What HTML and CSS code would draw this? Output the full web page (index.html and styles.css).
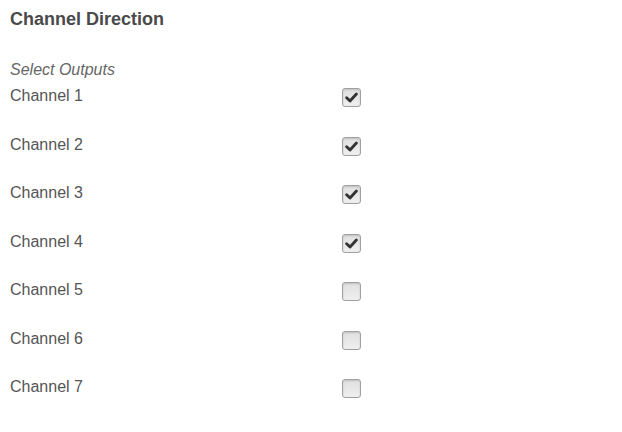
FILE: index.html
```html
<!DOCTYPE html>
<html>
<head>
<meta charset="utf-8">
<link rel="stylesheet" href="styles.css">
</head>
<body>
<div class="panel">
  <h3 class="title">Channel Direction</h3>
  <div class="sub">Select Outputs</div>
  <div class="rows">
    <div class="row"><span class="label">Channel 1</span><span class="box"><svg viewBox="0 0 19 19" width="19" height="19"><path d="M4.6 9.8 L8 12.9 L14.4 6" fill="none" stroke="#333" stroke-width="2.9" stroke-linecap="round" stroke-linejoin="round"/></svg></span></div>
    <div class="row"><span class="label">Channel 2</span><span class="box"><svg viewBox="0 0 19 19" width="19" height="19"><path d="M4.6 9.8 L8 12.9 L14.4 6" fill="none" stroke="#333" stroke-width="2.9" stroke-linecap="round" stroke-linejoin="round"/></svg></span></div>
    <div class="row"><span class="label">Channel 3</span><span class="box"><svg viewBox="0 0 19 19" width="19" height="19"><path d="M4.6 9.8 L8 12.9 L14.4 6" fill="none" stroke="#333" stroke-width="2.9" stroke-linecap="round" stroke-linejoin="round"/></svg></span></div>
    <div class="row"><span class="label">Channel 4</span><span class="box"><svg viewBox="0 0 19 19" width="19" height="19"><path d="M4.6 9.8 L8 12.9 L14.4 6" fill="none" stroke="#333" stroke-width="2.9" stroke-linecap="round" stroke-linejoin="round"/></svg></span></div>
    <div class="row"><span class="label">Channel 5</span><span class="box"></span></div>
    <div class="row"><span class="label">Channel 6</span><span class="box"></span></div>
    <div class="row"><span class="label">Channel 7</span><span class="box"></span></div>
  </div>
</div>
</body>
</html>
```
FILE: styles.css
```css
html, body {
  margin: 0;
  padding: 0;
  background: #ffffff;
}
.panel {
  padding: 8px 10px 0 10px;
  font-family: "Liberation Sans", Arial, sans-serif;
  color: #555555;
}
.title {
  margin: 0;
  font-size: 18px;
  line-height: 22px;
  font-weight: bold;
  color: #4a4a4a;
}
.sub {
  margin-top: 30px;
  font-size: 16px;
  line-height: 20px;
  font-style: italic;
  color: #666666;
}
.rows {
  margin-top: 6px;
  display: flex;
  flex-direction: column;
}
.row {
  display: flex;
  align-items: flex-start;
  height: 48.5px;
}
.label {
  width: 332px;
  font-size: 16px;
  line-height: 20px;
  color: #555555;
}
.box {
  margin-top: 2px;
  width: 17px;
  height: 17px;
  border: 1px solid #a0a0a0;
  border-radius: 3px;
  background: linear-gradient(#e0e0e0, #efefef);
  box-shadow: inset 0 1px 2px rgba(0,0,0,0.15);
  display: flex;
  align-items: center;
  justify-content: center;
  overflow: hidden;
}
.box svg {
  display: block;
  flex: none;
}
```
